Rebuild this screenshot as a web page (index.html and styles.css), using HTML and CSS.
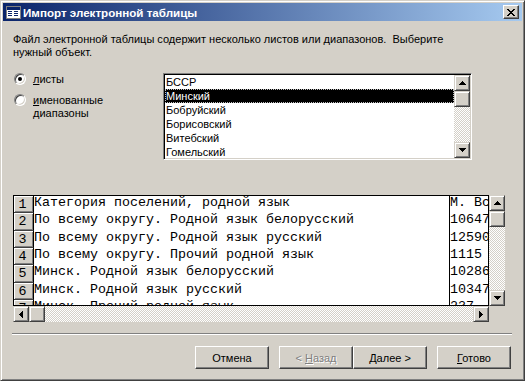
FILE: index.html
```html
<!DOCTYPE html>
<html lang="ru">
<head>
  <meta charset="UTF-8" />
  <title>Импорт электронной таблицы</title>
  <link rel="stylesheet" href="styles.css">
</head>
<body>
  <div class="window">
    <div class="titlebar">
      <svg class="app-icon" width="16" height="16" viewBox="0 0 16 16" shape-rendering="crispEdges">
        <rect x="1" y="2" width="14" height="12" fill="#fff" stroke="#808080"/>
        <rect x="1.5" y="2.5" width="13" height="3" fill="#0a246a"/>
        <path d="M3 7h4M9 7h4M3 9h4M9 9h4M3 11h4M9 11h4" stroke="#0a246a"/>
      </svg>
      <span class="title">Импорт электронной таблицы</span>
      <div class="close">
        <svg width="8" height="7" viewBox="0 0 8 7" shape-rendering="crispEdges">
          <path d="M0 0h2v1h-2zM6 0h2v1h-2zM1 1h2v1h-2zM5 1h2v1h-2zM2 2h4v1h-4zM3 3h2v1h-2zM2 4h4v1h-4zM1 5h2v1h-2zM5 5h2v1h-2zM0 6h2v1h-2zM6 6h2v1h-2z" fill="#000"/>
        </svg>
      </div>
    </div>

    <div class="content">
      <p class="intro">Файл электронной таблицы содержит несколько листов или диапазонов.&nbsp; Выберите<br>нужный объект.</p>

      <div class="choose">
        <div class="radios">
          <label class="radio"><span class="circle checked"></span><span><u>л</u>исты</span></label>
          <label class="radio"><span class="circle"></span><span><u>и</u>менованные<br>диапазоны</span></label>
        </div>
        <div class="listbox">
          <ul class="items">
            <li>БССР</li>
            <li class="selected">Минский</li>
            <li>Бобруйский</li>
            <li>Борисовский</li>
            <li>Витебский</li>
            <li>Гомельский</li>
          </ul>
          <div class="vscroll">
            <div class="sb-btn"><svg width="7" height="4" viewBox="0 0 7 4" shape-rendering="crispEdges"><path d="M3 0h1v1h-1zM2 1h3v1h-3zM1 2h5v1h-5zM0 3h7v1h-7z"/></svg></div>
            <div class="sb-btn"></div>
            <div class="track"></div>
            <div class="sb-btn"><svg width="7" height="4" viewBox="0 0 7 4" shape-rendering="crispEdges"><path d="M0 0h7v1h-7zM1 1h5v1h-5zM2 2h3v1h-3zM3 3h1v1h-1z"/></svg></div>
          </div>
        </div>
      </div>

      <div class="sheet">
        <div class="sheet-main">
          <div class="table">
            <div class="row"><div class="num">1</div><div class="cell a">Категория поселений, родной язык</div><div class="cell b">М. Вс</div></div>
            <div class="row"><div class="num">2</div><div class="cell a">По всему округу. Родной язык белорусский</div><div class="cell b">10647</div></div>
            <div class="row"><div class="num">3</div><div class="cell a">По всему округу. Родной язык русский</div><div class="cell b">12590</div></div>
            <div class="row"><div class="num">4</div><div class="cell a">По всему округу. Прочий родной язык</div><div class="cell b">1115</div></div>
            <div class="row"><div class="num">5</div><div class="cell a">Минск. Родной язык белорусский</div><div class="cell b">10286</div></div>
            <div class="row"><div class="num">6</div><div class="cell a">Минск. Родной язык русский</div><div class="cell b">10347</div></div>
            <div class="row"><div class="num">7</div><div class="cell a">Минск. Прочий родной язык</div><div class="cell b">237</div></div>
          </div>
          <div class="vscroll">
            <div class="sb-btn"><svg width="7" height="4" viewBox="0 0 7 4" shape-rendering="crispEdges"><path d="M3 0h1v1h-1zM2 1h3v1h-3zM1 2h5v1h-5zM0 3h7v1h-7z"/></svg></div>
            <div class="sb-btn"></div>
            <div class="track"></div>
            <div class="sb-btn"><svg width="7" height="4" viewBox="0 0 7 4" shape-rendering="crispEdges"><path d="M0 0h7v1h-7zM1 1h5v1h-5zM2 2h3v1h-3zM3 3h1v1h-1z"/></svg></div>
          </div>
        </div>
        <div class="sheet-foot">
          <div class="hscroll">
            <div class="sb-btn"><svg width="4" height="7" viewBox="0 0 4 7" shape-rendering="crispEdges"><path d="M3 0h1v7h-1zM2 1h1v5h-1zM1 2h1v3h-1zM0 3h1v1h-1z"/></svg></div>
            <div class="sb-btn"></div>
            <div class="track"></div>
            <div class="sb-btn"><svg width="4" height="7" viewBox="0 0 4 7" shape-rendering="crispEdges"><path d="M0 0h1v7h-1zM1 1h1v5h-1zM2 2h1v3h-1zM3 3h1v1h-1z"/></svg></div>
          </div>
          <div class="corner"></div>
        </div>
      </div>

      <div class="separator"></div>

      <div class="buttons">
        <button class="btn">Отмена</button>
        <div class="btn-pair">
          <button class="btn" disabled>&lt; <u>Н</u>азад</button>
          <button class="btn"><u>Д</u>алее &gt;</button>
        </div>
        <button class="btn"><u>Г</u>отово</button>
      </div>
    </div>
  </div>
</body>
</html>
```

FILE: styles.css
```css
:root {
  --face: #d4d0c8;
  --light: #ffffff;
  --shadow: #808080;
  --dark: #404040;
}
* {
  box-sizing: border-box;
}
body {
  margin: 0;
  background: var(--face);
  font-family: 'Liberation Sans', Arial, sans-serif;
  font-size: 11px;
  color: #000;
}
.window {
  width: 525px;
  height: 381px;
  background: var(--face);
  border: 1px solid;
  border-color: var(--face) var(--dark) var(--dark) var(--face);
  box-shadow: inset 1px 1px var(--light), inset -1px -1px var(--shadow);
  padding: 2px;
}

/* caption */
.titlebar {
  height: 18px;
  display: flex;
  align-items: center;
  background: linear-gradient(to right, #0a246a, #a6caf0);
}
.app-icon {
  margin-left: 2px;
  flex: none;
}
.title {
  margin-left: 2px;
  color: #fff;
  font-weight: bold;
  font-size: 11.6px;
  white-space: nowrap;
}
.close {
  margin-left: auto;
  margin-right: 3px;
  width: 16px;
  height: 14px;
  display: flex;
  align-items: center;
  justify-content: center;
  background: var(--face);
  border: 1px solid;
  border-color: var(--light) var(--dark) var(--dark) var(--light);
  box-shadow: inset -1px -1px var(--shadow);
}

.content {
  padding: 12px 11px 0 10px;
}
.intro {
  margin: 0;
  line-height: 13px;
  height: 26px;
  white-space: nowrap;
}

/* radio + list */
.choose {
  display: flex;
  margin-top: 14px;
  height: 87px;
}
.radios {
  width: 150px;
  display: flex;
  flex-direction: column;
  gap: 8px;
}
.radio {
  display: flex;
  align-items: flex-start;
  gap: 7px;
  line-height: 13px;
}
.circle {
  position: relative;
  flex: none;
  width: 12px;
  height: 12px;
  margin-left: 1px;
  border-radius: 50%;
  background: #fff;
  border: 1px solid;
  border-color: var(--shadow) var(--light) var(--light) var(--shadow);
  box-shadow: inset 1px 1px var(--dark), inset -1px -1px var(--face);
}
.circle.checked::after {
  content: '';
  position: absolute;
  left: 3px;
  top: 3px;
  width: 4px;
  height: 4px;
  border-radius: 50%;
  background: #000;
}
.listbox {
  width: 309px;
  height: 87px;
  display: flex;
  background: #fff;
  border: 1px solid;
  border-color: var(--shadow) var(--light) var(--light) var(--shadow);
  box-shadow: inset 1px 1px #000, inset -1px -1px var(--face);
  padding: 1px;
}
.items {
  flex: 1;
  margin: 0;
  padding: 0;
  list-style: none;
  overflow: hidden;
}
.items li {
  height: 14px;
  line-height: 14px;
  padding-left: 1px;
  white-space: nowrap;
}
.items li.selected {
  background: #000;
  color: #fff;
  outline: 1px dotted #c0c0c0;
  outline-offset: -1px;
}

/* scrollbars */
.vscroll {
  width: 16px;
  flex: none;
  display: flex;
  flex-direction: column;
}
.hscroll {
  height: 16px;
  flex: 1;
  display: flex;
}
.track {
  flex: 1;
  background:
    repeating-conic-gradient(#fff 0 25%, var(--face) 0 50%) 0 0 / 2px 2px;
}
.sb-btn {
  width: 16px;
  height: 16px;
  flex: none;
  display: flex;
  align-items: center;
  justify-content: center;
  background: var(--face);
  border: 1px solid;
  border-color: var(--face) var(--dark) var(--dark) var(--face);
  box-shadow: inset 1px 1px var(--light), inset -1px -1px var(--shadow);
}

/* spreadsheet preview */
.sheet {
  margin-top: 35px;
  width: 492px;
}
.sheet-main {
  display: flex;
  height: 111px;
}
.table {
  width: 476px;
  height: 111px;
  border: 1px solid #000;
  background: #fff;
  overflow: hidden;
}
.row {
  display: flex;
  height: 17.33px;
}
.num {
  width: 20px;
  flex: none;
  background: var(--face);
  border-right: 1px solid #000;
  border-bottom: 1px solid var(--dark);
  box-shadow: inset 1px 1px var(--light), inset -1px -1px var(--shadow);
  font-family: 'Liberation Mono', 'Courier New', monospace;
  font-size: 13.33px;
  line-height: 18px;
  text-align: center;
  padding-right: 2px;
}
.cell {
  font-family: 'Liberation Mono', 'Courier New', monospace;
  font-size: 13.33px;
  line-height: 14px;
  white-space: pre;
  overflow: hidden;
}
.cell.a {
  width: 416px;
  flex: none;
  border-right: 1px solid #000;
}
.cell.b {
  flex: 1;
}
.sheet-foot {
  display: flex;
  height: 16px;
}
.corner {
  width: 16px;
  background: var(--face);
}

.separator {
  margin: 11px 0 0 -1px;
  width: 500px;
  height: 2px;
  border-top: 1px solid var(--shadow);
  border-bottom: 1px solid var(--light);
}

/* dialog buttons */
.buttons {
  margin-top: 11px;
  display: flex;
  justify-content: flex-end;
  gap: 10px;
}
.btn-pair {
  display: flex;
}
.btn {
  width: 74px;
  height: 23px;
  padding: 0;
  font: inherit;
  color: #000;
  background: var(--face);
  border: 1px solid;
  border-color: var(--light) var(--dark) var(--dark) var(--light);
  box-shadow: inset -1px -1px var(--shadow), inset 1px 1px var(--face);
}
.btn:disabled {
  color: var(--shadow);
  text-shadow: 1px 1px var(--light);
}
```
